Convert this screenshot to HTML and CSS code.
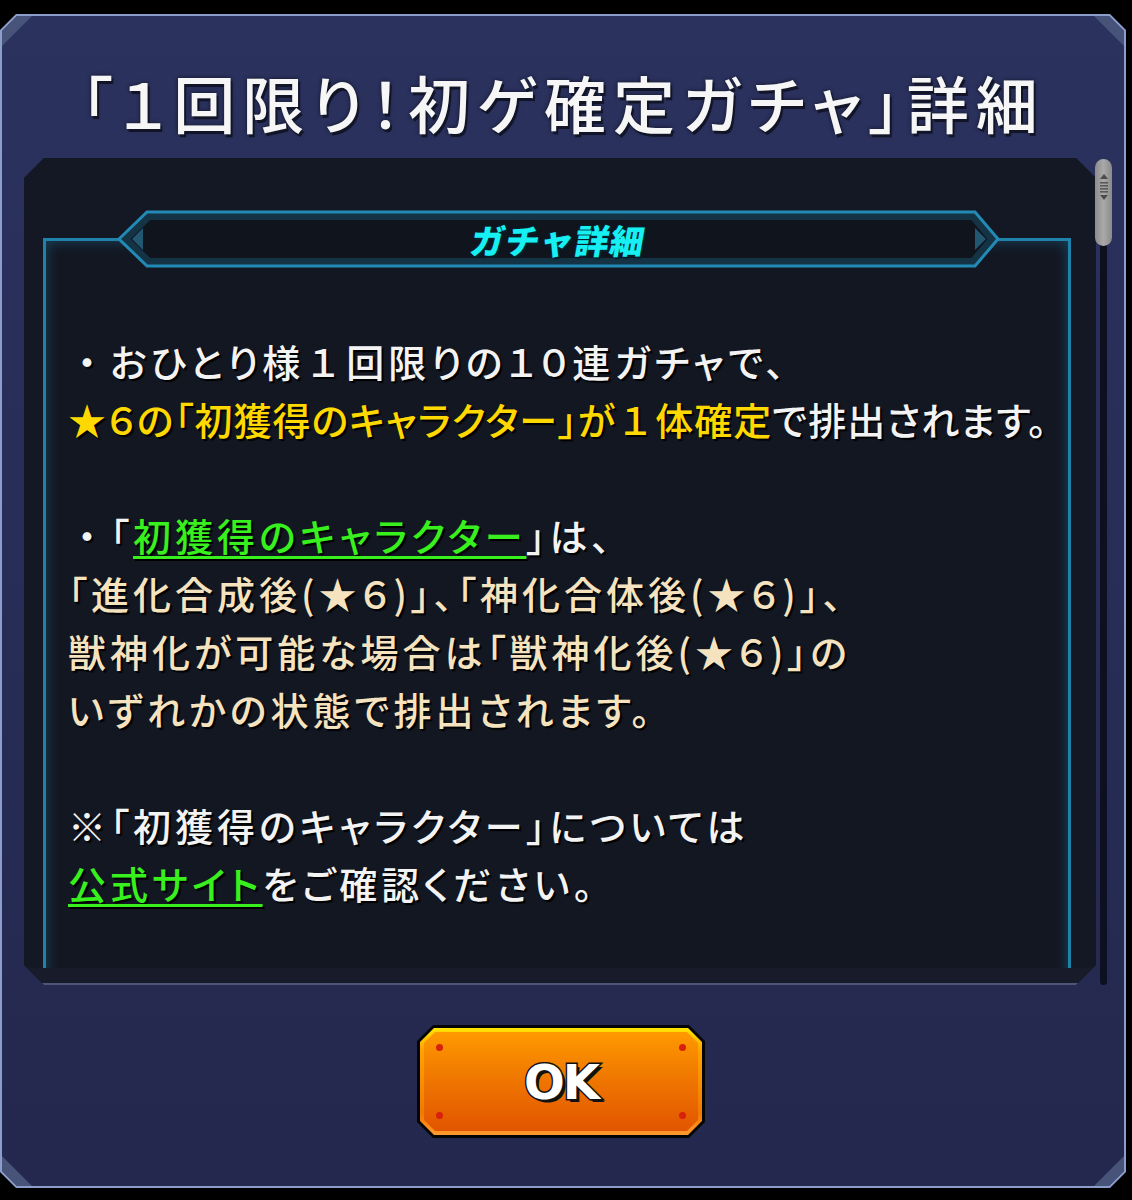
FILE: index.html
```html
<!DOCTYPE html>
<html lang="ja">
<head>
  <meta charset="UTF-8">
  <title>ガチャ詳細</title>
  <meta name="viewport" content="width=device-width, initial-scale=1.0">
  <link rel="stylesheet" href="styles.css">
</head>
<body>

  <div class="dialog">
    <div class="dialog-inner">
      <span class="corner tl"></span>
      <span class="corner tr"></span>
      <span class="corner bl"></span>
      <span class="corner br"></span>

      <h1 class="title">「１回限り！初ゲ確定ガチャ」詳細</h1>

      <div class="body-row">
        <div class="panel">
          <div class="viewport">
            <div class="frame">
              <div class="banner">
                <svg class="banner-bg" viewBox="0 0 883 58" width="883" height="58">
                  <defs>
                    <clipPath id="bannerClip">
                      <polygon points="2,29 30,2 858,2 881,29 858,56 30,56"/>
                    </clipPath>
                  </defs>
                  <polygon points="2,29 30,2 858,2 881,29 858,56 30,56" fill="#10141d"/>
                  <polygon points="2,29 30,2 858,2 881,29 858,56 30,56" fill="none" stroke="#1c6f95" stroke-opacity="0.35" stroke-width="16" clip-path="url(#bannerClip)"/>
                  <polygon points="2,29 30,2 858,2 881,29 858,56 30,56" fill="none" stroke="#2389b5" stroke-width="3"/>
                  <polygon points="15,29 26,18 26,40" fill="#2b7495" opacity="0.7"/>
                  <polygon points="869,29 858,18 858,40" fill="#2b7495" opacity="0.7"/>
                </svg>
                <span class="banner-text">ガチャ詳細</span>
              </div>

              <div class="text">
                <p class="w"><span class="fw">・</span>おひとり様<span class="fw">１</span>回限りの１０連ガチャで、<br><span class="tight"><span class="y">★６の「初獲得のキャラクター」が<span class="fw">１</span>体確定</span>で排出されます。</span></p>
                <p class="c"><span class="w"><span class="fw">・</span>「<a class="g" href="#">初獲得のキャラクター</a>」は、</span><br>「進化合成後(★６)」、「神化合体後(★６)」、<br>獣神化が可能な場合は「獣神化後(★６)」の<br>いずれかの状態で排出されます。</p>
                <p class="w">※「初獲得のキャラクター」については<br><a class="g" href="#">公式サイト</a>をご確認ください。</p>
              </div>
            </div>
          </div>
          <div class="panel-foot"></div>
        </div>

        <div class="scrollbar">
          <div class="thumb">
            <svg viewBox="0 0 10 26" width="10" height="26">
              <polygon points="5,0 9,5 1,5" fill="#4c4c4c"/>
              <rect x="1" y="8" width="8" height="1.6" fill="#5a5a5a"/>
              <rect x="1" y="11" width="8" height="1.6" fill="#5a5a5a"/>
              <rect x="1" y="14" width="8" height="1.6" fill="#5a5a5a"/>
              <rect x="1" y="17" width="8" height="1.6" fill="#5a5a5a"/>
              <polygon points="5,26 9,21 1,21" fill="#4c4c4c"/>
            </svg>
          </div>
        </div>
      </div>

      <div class="actions">
        <button class="ok">
          <span class="ok-rim">
            <span class="ok-face">
              <span class="dot d1"></span>
              <span class="dot d2"></span>
              <span class="dot d3"></span>
              <span class="dot d4"></span>
              <span class="ok-label">OK</span>
            </span>
          </span>
        </button>
      </div>
    </div>
  </div>

</body>
</html>
```

FILE: styles.css
```css
body {
  margin: 0;
  background: #000;
  width: 1132px;
  height: 1200px;
  overflow: hidden;
  font-family: "Noto Sans CJK JP", "Noto Sans", sans-serif;
}

.dialog {
  width: 1126px;
  height: 1174px;
  margin-top: 14px;
  padding: 2px;
  box-sizing: border-box;
  background: #8b9dcb;
  clip-path: polygon(16px 0, calc(100% - 16px) 0, 100% 16px, 100% calc(100% - 16px), calc(100% - 16px) 100%, 16px 100%, 0 calc(100% - 16px), 0 16px);
}

.dialog-inner {
  position: relative;
  height: 100%;
  background: linear-gradient(#2b325e, #272c55 60%, #24284e);
  clip-path: polygon(15px 0, calc(100% - 15px) 0, 100% 15px, 100% calc(100% - 15px), calc(100% - 15px) 100%, 15px 100%, 0 calc(100% - 15px), 0 15px);
}

.corner {
  position: absolute;
  width: 30px;
  height: 30px;
  background: #48537a;
}

.corner.tl { left: 0; top: 0; clip-path: polygon(0 0, 100% 0, 0 100%); }
.corner.tr { right: 0; top: 0; clip-path: polygon(0 0, 100% 0, 100% 100%); }
.corner.bl { left: 0; bottom: 0; clip-path: polygon(0 0, 100% 100%, 0 100%); }
.corner.br { right: 0; bottom: 0; clip-path: polygon(100% 0, 100% 100%, 0 100%); }

.title {
  margin: 0;
  height: 142px;
  padding-top: 30px;
  box-sizing: border-box;
  display: flex;
  align-items: center;
  justify-content: center;
  font-size: 62px;
  font-weight: 500;
  line-height: 1.2;
  letter-spacing: 7px;
  color: #f6f6f6;
  font-feature-settings: "palt";
  text-shadow: 2px 3px 0 #111527, 0 0 4px #111527;
}

.body-row {
  display: flex;
  margin-left: 22px;
}

.panel {
  width: 1072px;
  height: 827px;
  background: #151a29;
  clip-path: polygon(20px 0, calc(100% - 20px) 0, 100% 20px, 100% calc(100% - 20px), calc(100% - 20px) 100%, 20px 100%, 0 calc(100% - 20px), 0 20px);
}

.viewport {
  height: 810px;
  overflow: hidden;
  padding: 80px 25px 0 19px;
  box-sizing: border-box;
  background: #141824;
}

.panel-foot {
  height: 15px;
  background: #171b2a;
  border-bottom: 2px solid #4e5577;
}

.frame {
  height: 900px;
  border: 3px solid #1f82ab;
  box-shadow: inset 0 0 14px rgba(31, 130, 171, 0.45);
  background: #131722;
}

.banner {
  position: relative;
  height: 58px;
  margin: -31px 68px 0 71px;
  display: flex;
  align-items: center;
  justify-content: center;
}

.banner-bg {
  position: absolute;
  left: 0;
  top: 0;
}

.banner-text {
  position: relative;
  font-size: 34px;
  font-weight: 900;
  color: #17f0f2;
  letter-spacing: 1px;
  transform: skewX(-10deg);
  text-shadow: 2px 2px 0 #05222c, 0 0 3px #053040;
}

.text {
  margin-top: 64px;
  padding-left: 22px;
  font-size: 38px;
  font-weight: 500;
  line-height: 58px;
  letter-spacing: 4px;
  font-feature-settings: "palt";
  text-shadow: 2px 2px 1px #000;
}

.text p {
  margin: 0 0 58px 0;
}

.fw { font-feature-settings: normal; }
.tight { letter-spacing: 1px; }

.w { color: #f3f3f3; }
.c { color: #f5e3c0; }
.y { color: #ffd800; }

.g {
  color: #38f01e;
  text-decoration: underline;
  text-decoration-thickness: 3px;
  text-underline-offset: 5px;
}

.scrollbar {
  position: relative;
  width: 17px;
  height: 827px;
  margin-left: -1px;
}

.scrollbar::before {
  content: "";
  position: absolute;
  left: 5px;
  top: 2px;
  width: 7px;
  bottom: 0;
  border-radius: 4px;
  background: #0d1020;
}

.thumb {
  position: relative;
  width: 17px;
  height: 87px;
  margin-top: 1px;
  border-radius: 9px;
  background: linear-gradient(90deg, #8c8c8c, #a9a9a9 50%, #8a8a8a);
  display: flex;
  align-items: flex-start;
  justify-content: center;
  padding-top: 15px;
  box-sizing: border-box;
}

.actions {
  display: flex;
  justify-content: center;
  padding-top: 40px;
  padding-right: 4px;
}

.ok {
  display: block;
  width: 288px;
  height: 113px;
  padding: 3px;
  border: none;
  background: #050505;
  cursor: pointer;
  clip-path: polygon(16px 0, calc(100% - 16px) 0, 100% 16px, 100% calc(100% - 16px), calc(100% - 16px) 100%, 16px 100%, 0 calc(100% - 16px), 0 16px);
}

.ok-rim {
  display: block;
  height: 100%;
  padding: 4px;
  box-sizing: border-box;
  background: linear-gradient(#ffe600, #ffa400 20%, #f07a00 80%, #ff9a30);
  clip-path: polygon(14px 0, calc(100% - 14px) 0, 100% 14px, 100% calc(100% - 14px), calc(100% - 14px) 100%, 14px 100%, 0 calc(100% - 14px), 0 14px);
}

.ok-face {
  position: relative;
  display: flex;
  align-items: center;
  justify-content: center;
  height: 100%;
  background: linear-gradient(#ff9a00, #f07800 45%, #e25500);
  clip-path: polygon(11px 0, calc(100% - 11px) 0, 100% 11px, 100% calc(100% - 11px), calc(100% - 11px) 100%, 11px 100%, 0 calc(100% - 11px), 0 11px);
}

.dot {
  position: absolute;
  width: 7px;
  height: 7px;
  border-radius: 50%;
  background: #d8200c;
}

.d1 { left: 12px; top: 12px; }
.d2 { right: 12px; top: 12px; }
.d3 { left: 12px; bottom: 12px; }
.d4 { right: 12px; bottom: 12px; }

.ok-label {
  font-family: "DejaVu Sans", sans-serif;
  font-size: 48px;
  font-weight: bold;
  color: #fff;
  letter-spacing: -2px;
  -webkit-text-stroke: 3px #111;
  paint-order: stroke fill;
  text-shadow: 3px 3px 0 #111;
}
```
